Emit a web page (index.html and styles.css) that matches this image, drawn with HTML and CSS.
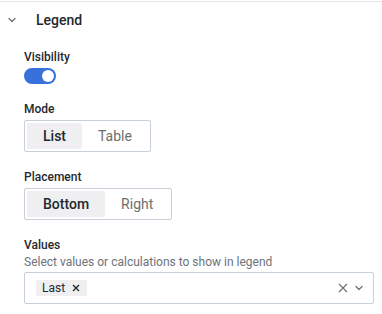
FILE: index.html
```html
<!DOCTYPE html>
<html lang="en">
  <head>
    <meta charset="UTF-8" />
    <title>Legend options</title>
    <link rel="stylesheet" href="styles.css">
  </head>
  <body>
    <div class="options-group">
      <div class="group-header">
        <svg class="chevron" width="16" height="16" viewBox="0 0 16 16">
          <path d="M5 6.5l3 3 3-3" fill="none" stroke="#6e7278" stroke-width="1.3" stroke-linecap="round" stroke-linejoin="round" />
        </svg>
        <span class="group-title">Legend</span>
      </div>
      <div class="group-body">
        <div class="field">
          <label class="field-label">Visibility</label>
          <div class="switch"><span class="knob"></span></div>
        </div>
        <div class="field">
          <label class="field-label">Mode</label>
          <div class="radio-group">
            <span class="radio active">List</span>
            <span class="radio">Table</span>
          </div>
        </div>
        <div class="field">
          <label class="field-label">Placement</label>
          <div class="radio-group">
            <span class="radio active">Bottom</span>
            <span class="radio">Right</span>
          </div>
        </div>
        <div class="field">
          <label class="field-label">Values</label>
          <div class="field-desc">Select values or calculations to show in legend</div>
          <div class="select">
            <span class="tag">Last
              <svg width="10" height="10" viewBox="0 0 10 10">
                <path d="M2 2l6 6M8 2l-6 6" stroke="#24292e" stroke-width="1.4" />
              </svg>
            </span>
            <span class="select-icons">
              <svg width="12" height="12" viewBox="0 0 12 12">
                <path d="M2 2l8 8M10 2l-8 8" stroke="#6e7278" stroke-width="1.2" />
              </svg>
              <svg width="12" height="12" viewBox="0 0 12 12">
                <path d="M3 4.5l3 3 3-3" fill="none" stroke="#6e7278" stroke-width="1.3" stroke-linecap="round" stroke-linejoin="round" />
              </svg>
            </span>
          </div>
        </div>
      </div>
    </div>
  </body>
</html>
```

FILE: styles.css
```css
body {
  margin: 0;
  padding-top: 1px;
  background-color: #fff;
  font-family: Roboto, "Liberation Sans", sans-serif;
  color: #24292e;
}

.options-group {
  border-top: 1px solid #e4e5e6;
}

.group-header {
  display: flex;
  align-items: center;
  height: 36px;
  padding-left: 4px;
}
.chevron {
  margin-right: 16px;
}
.group-title {
  font-size: 14px;
  font-weight: 500;
}

.group-body {
  padding: 10px 8px 8px 24px;
}

.field {
  margin-bottom: 16px;
}
.field-label {
  display: block;
  font-size: 12px;
  font-weight: 500;
  line-height: 18px;
  margin-bottom: 2px;
}
.field-desc {
  font-size: 12px;
  line-height: 16px;
  color: #6c737a;
  margin-top: -2px;
  margin-bottom: 2px;
}

.switch {
  position: relative;
  width: 32px;
  height: 16px;
  border-radius: 8px;
  background-color: #3871dc;
}
.knob {
  position: absolute;
  top: 2px;
  right: 2px;
  width: 12px;
  height: 12px;
  border-radius: 50%;
  background-color: #fff;
}

.radio-group {
  display: inline-flex;
  height: 32px;
  box-sizing: border-box;
  padding: 2px;
  border: 1px solid #c7d0d9;
  border-radius: 2px;
}
.radio {
  display: flex;
  align-items: center;
  padding: 0 16px;
  font-size: 14px;
  color: #6e6e6e;
  border-radius: 2px;
}
.radio.active {
  background-color: #efeff1;
  color: #24292e;
  font-weight: 500;
}

.select {
  display: flex;
  align-items: center;
  justify-content: space-between;
  height: 32px;
  box-sizing: border-box;
  padding: 0 8px 0 11px;
  border: 1px solid #c7d0d9;
  border-radius: 2px;
}
.tag {
  display: flex;
  align-items: center;
  gap: 6px;
  height: 16px;
  padding: 0 6px;
  background-color: #efeff1;
  border-radius: 2px;
  font-size: 12px;
}
.select-icons {
  display: flex;
  align-items: center;
  gap: 4px;
}
```
